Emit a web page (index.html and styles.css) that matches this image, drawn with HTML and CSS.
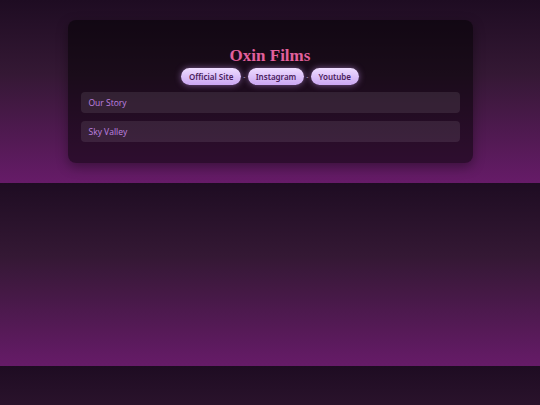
FILE: index.html
```html
<!DOCTYPE html>
<html>
<head>
<meta charset="utf-8">
<link rel="stylesheet" href="styles.css">
</head>
<body>
<div class="card">
  <h1 class="title">Oxin Films</h1>
  <div class="links">
    <a class="pill">Official Site</a>
    <span class="sep">-</span>
    <a class="pill">Instagram</a>
    <span class="sep">-</span>
    <a class="pill">Youtube</a>
  </div>
  <div class="item">Our Story</div>
  <div class="item">Sky Valley</div>
</div>
</body>
</html>
```

FILE: styles.css
```css
html {
  background: linear-gradient(to bottom, #1e0c22 0%, #341834 40%, #661b68 100%);
}
body {
  margin: 0;
  padding: 20px 0 20px;
  font-family: "Noto Sans", sans-serif;
}
.card {
  width: 75%;
  margin: 0 auto;
  box-sizing: border-box;
  padding: 26px 13px 21px;
  border-radius: 8px;
  background: rgba(0, 0, 0, 0.5);
  box-shadow: 0 4px 12px rgba(0, 0, 0, 0.35);
}
.title {
  margin: 0;
  text-align: center;
  font-family: "Liberation Serif", serif;
  font-weight: bold;
  font-size: 17px;
  line-height: 20px;
  color: #e2609c;
}
.links {
  display: flex;
  justify-content: center;
  align-items: center;
  gap: 2px;
  margin-top: 2px;
  margin-bottom: 7px;
}
.pill {
  display: block;
  height: 17px;
  line-height: 17px;
  padding: 0 8px;
  border-radius: 9px;
  background: linear-gradient(to bottom, #eedcff, #caa6f2);
  color: #4a1d5c;
  font-size: 8px;
  font-weight: 600;
  box-shadow: 0 0 6px rgba(200, 150, 240, 0.55);
}
.sep {
  color: #b8a8c0;
  font-size: 7px;
}
.item {
  height: 21px;
  line-height: 21px;
  padding: 0 8px;
  margin-bottom: 8px;
  border-radius: 4px;
  background: rgba(255, 255, 255, 0.09);
  color: #bf82e0;
  font-family: "Open Sans", sans-serif;
  font-size: 8.5px;
  font-weight: 400;
}
.item:last-child {
  margin-bottom: 0;
}
```
